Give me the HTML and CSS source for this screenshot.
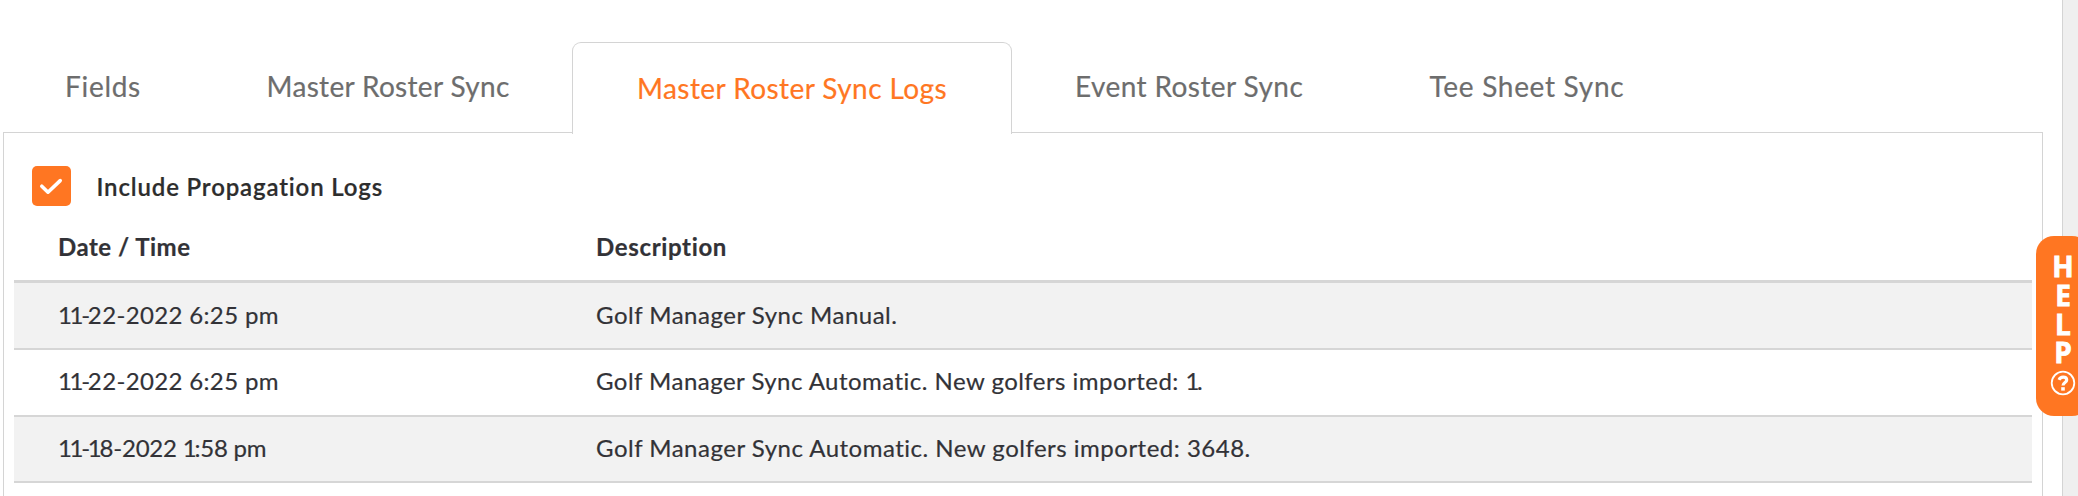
FILE: index.html
```html
<!DOCTYPE html>
<html lang="en">
<head>
<meta charset="utf-8">
<title>Master Roster Sync Logs</title>
<link rel="stylesheet" href="styles.css">
</head>
<body>
<main class="page">
  <nav class="tabs">
    <a class="tab tab-fields">Fields</a>
    <a class="tab tab-master">Master Roster Sync</a>
    <a class="tab tab-logs active">Master Roster Sync Logs</a>
    <a class="tab tab-event">Event Roster Sync</a>
    <a class="tab tab-tee">Tee Sheet Sync</a>
  </nav>
  <section class="panel">
    <label class="option">
      <span class="checkbox">
        <svg width="39" height="40" viewBox="0 0 39 40"><path d="M9.8 20.2L16 26.2L28.2 14.6" fill="none" stroke="#fff" stroke-width="3.6" stroke-linecap="round" stroke-linejoin="round"/></svg>
      </span>
      <span class="option-text">Include Propagation Logs</span>
    </label>
    <div class="log">
      <div class="row head"><div class="date">Date / Time</div><div class="desc">Description</div></div>
      <div class="row odd"><div class="date"><span class="ones">11-</span>22-2022 6:25 pm</div><div class="desc">Golf Manager Sync Manual.</div></div>
      <div class="row even"><div class="date"><span class="ones">11-</span>22-2022 6:25 pm</div><div class="desc">Golf Manager Sync Automatic. New golfers imported: <span class="one">1</span>.</div></div>
      <div class="row odd last"><div class="date"><span class="ones">11-1</span>8-2022 <span class="one">1</span>:58 pm</div><div class="desc">Golf Manager Sync Automatic. New golfers imported: 3648.</div></div>
    </div>
  </section>
</main>
<aside class="help">
  <span>H</span><span>E</span><span>L</span><span>P</span>
  <svg width="26" height="26" viewBox="0 0 26 26" fill="none" stroke="#fff"><circle cx="13" cy="13" r="11.3" stroke-width="1.8"/><path d="M9 9.8C9.8 8 11.2 7.2 13.1 7.2C15.3 7.2 16.7 8.3 16.7 10C16.7 12.6 13 12.4 13 15.6" stroke-width="3.2"/><path d="M13 17.2V20.6" stroke-width="3.6"/></svg>
</aside>
</body>
</html>
```
FILE: styles.css
```css
* { box-sizing: border-box; }
body {
  margin: 0;
  width: 2078px;
  height: 496px;
  overflow: hidden;
  background: #efefef;
  font-family: Lato, "Open Sans", sans-serif;
  font-size: 24px;
  color: #323237;
  white-space: nowrap;
  -webkit-text-stroke: .2px currentColor;
}
.page {
  width: 2063px;
  height: 496px;
  padding-top: 42px;
  background: #fff;
  border-right: 1px solid #d4d4d4;
}
.tabs { display: flex; height: 90px; }
.tab {
  height: 86px;
  padding-left: 64px;
  font-size: 28px;
  line-height: 88px;
  color: #6d6d6d;
}
.tab-fields { width: 201.5px; padding-left: 65px; letter-spacing: .7px; }
.tab-master { width: 370.5px; padding-left: 65px; letter-spacing: .33px; }
.tab-logs { width: 440px; letter-spacing: .43px; }
.tab-event { width: 354px; padding-left: 63px; letter-spacing: .42px; }
.tab-tee { padding-left: 63.5px; letter-spacing: .7px; }
.tab.active {
  position: relative;
  z-index: 1;
  height: 92px;
  padding-left: 64px;
  line-height: 90px;
  color: #ff7622;
  background: #fff;
  border: 1px solid #d4d4d4;
  border-bottom: 0;
  border-radius: 9px 9px 0 0;
}
.panel {
  width: 2040px;
  height: 380px;
  margin-left: 3px;
  padding: 33px 10px 0;
  border: 1px solid #d4d4d4;
}
.option { display: flex; height: 40px; padding-left: 18px; }
.checkbox { width: 39px; height: 40px; border-radius: 5px; background: #ff7622; }
.checkbox svg { display: block; }
.option-text {
  margin-left: 25.5px;
  font-weight: 600;
  line-height: 42px;
  letter-spacing: .85px;
  color: #2d2d2d;
}
.log { width: 2018px; }
.row {
  display: grid;
  grid-template-columns: 538px 1fr;
  height: 67px;
  padding-left: 44px;
  border-bottom: 2px solid #d6d6d6;
  line-height: 63px;
}
.row.odd { background: #f2f2f2; }
.row.even { line-height: 62px; }
.row.last { height: 66px; line-height: 62px; }
.row.head {
  height: 77px;
  padding-top: 10px;
  border-bottom-width: 3px;
  font-weight: 700;
  line-height: 62px;
}
.date { letter-spacing: .35px; }
.last .date { letter-spacing: -.2px; }
.desc { letter-spacing: .5px; }
.even .desc { letter-spacing: .47px; }
.head .date { letter-spacing: .5px; }
.head .desc { letter-spacing: .65px; }
.ones, .last .ones { letter-spacing: -2.3px; }
.one { letter-spacing: -2.3px; }
.help {
  position: absolute;
  top: 236px;
  left: 2036px;
  display: flex;
  flex-direction: column;
  align-items: center;
  width: 54px;
  height: 180px;
  padding-top: 16px;
  border-radius: 18px;
  background: #ff7622;
  color: #fff;
  font-family: "Open Sans", Lato, sans-serif;
  font-size: 28px;
  font-weight: 700;
  line-height: 28.8px;
  -webkit-text-stroke: .8px currentColor;
}
.help svg { margin-top: 3px; }
```
